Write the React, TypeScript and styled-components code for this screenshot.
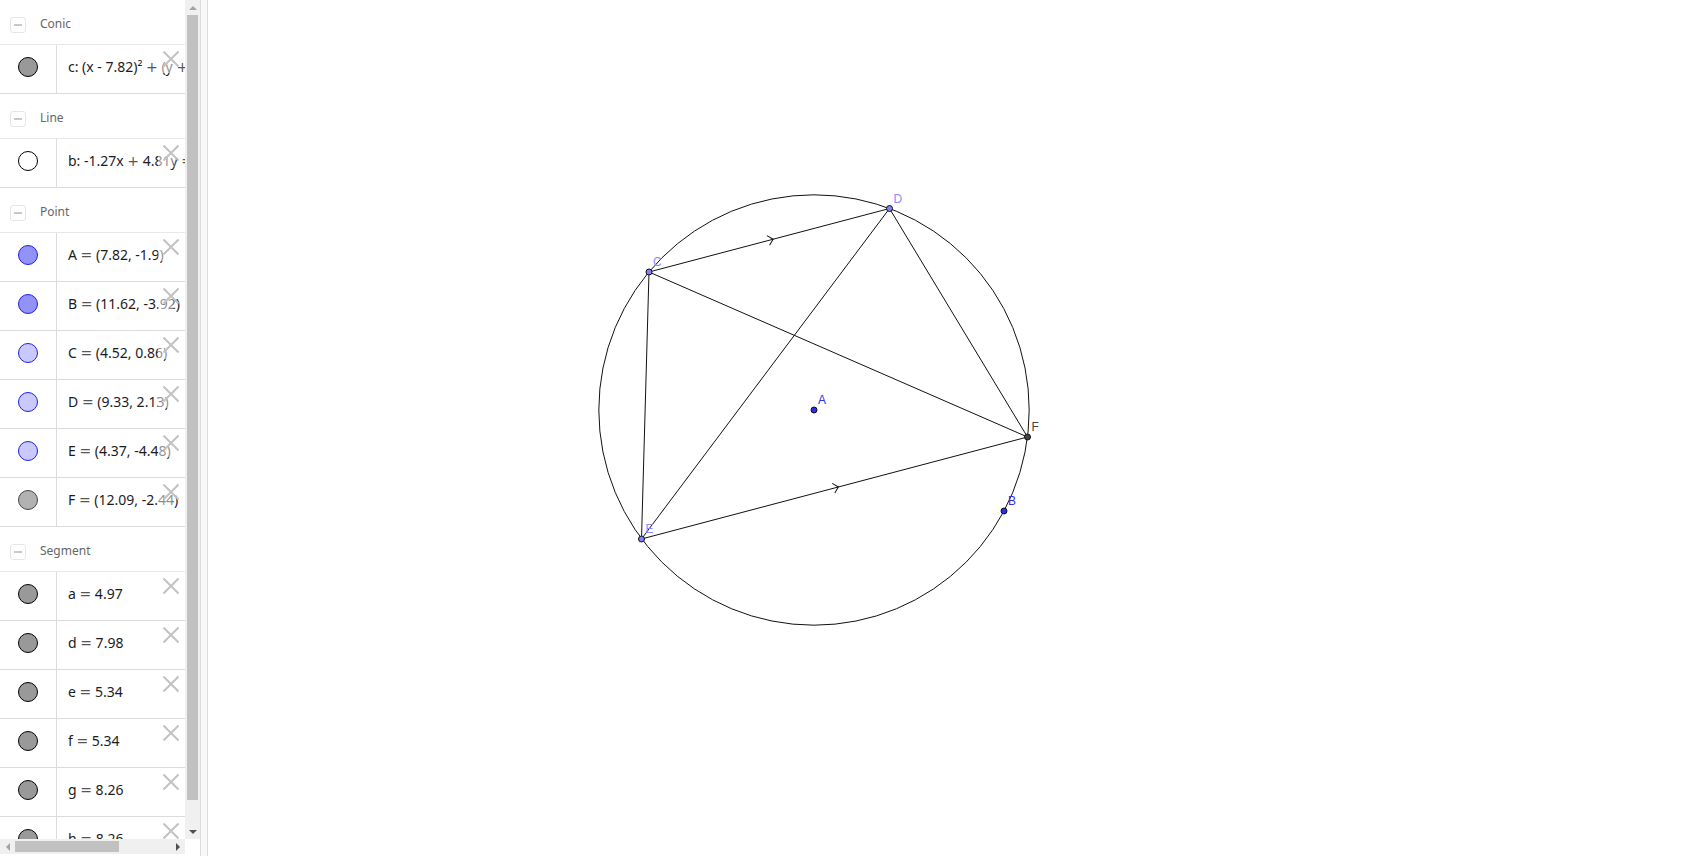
import React from "react";
import styled, { createGlobalStyle } from "styled-components";

const GlobalStyle = createGlobalStyle`
  * { box-sizing: border-box; }
  html, body, #root { height: 100%; margin: 0; }
  body { background: #fff; font-family: "Noto Sans", sans-serif; overflow: hidden; }
  button { border: 0; padding: 0; background: none; font: inherit; cursor: pointer; }
`;

const Workspace = styled.div`
  display: flex;
  height: 100vh;
  overflow: hidden;
`;

const Sidebar = styled.aside`
  flex: none;
  display: grid;
  grid-template-columns: 185px 15px;
  grid-template-rows: minmax(0, 1fr) 15px;
  padding-bottom: 2px;
`;

const List = styled.div`
  overflow: hidden;
`;

const GroupHeader = styled.h2`
  display: flex;
  align-items: center;
  gap: 14px;
  height: 45px;
  margin: 0;
  padding: 3px 0 0 10px;
  border-bottom: 1px solid #e8e8e8;
  color: #666;
  font-size: 12px;
  font-weight: 400;
  line-height: 16px;
`;

const Collapse = styled.button`
  display: flex;
  align-items: center;
  justify-content: center;
  width: 16px;
  height: 16px;
  margin-top: 3px;
  border: 1px solid #e6e6e6;
  border-radius: 3px;

  &::before {
    content: "";
    width: 8px;
    height: 2px;
    background: #c8c8c8;
  }
`;

const Rows = styled.ul`
  margin: 0;
  padding: 0;
  list-style: none;
`;

const Row = styled.li`
  display: grid;
  grid-template-columns: 57px 1fr;
  position: relative;
  height: 49px;
  border-bottom: 1px solid #dcdcdc;
`;

const MarbleCell = styled.div`
  display: flex;
  justify-content: center;
  padding-top: 12px;
  border-right: 1px solid #dcdcdc;
`;

const Marble = styled.button<{ $fill: string; $stroke: string }>`
  width: 20px;
  height: 20px;
  border: 1px solid ${(p) => p.$stroke};
  border-radius: 50%;
  background: ${(p) => p.$fill};
`;

const Formula = styled.div`
  overflow: hidden;
  padding: 12px 0 0 11px;
  color: #1c1c1f;
  font-size: 14px;
  line-height: 20px;
  white-space: nowrap;
`;

const Operator = styled.span`
  color: #555;
  font-family: "DejaVu Sans", sans-serif;
  font-weight: 400;
`;

const Remove = styled.button`
  position: absolute;
  top: 0;
  right: 0;
  display: flex;
  width: 27px;
  height: 28px;
  padding: 6px 0 0 5px;
  background: linear-gradient(to right, rgba(255, 255, 255, 0.5) 50%, rgba(255, 255, 255, 0) 70%);
`;

const VTrack = styled.div`
  display: flex;
  flex-direction: column;
  align-items: center;
  justify-content: space-between;
  background: #f0f0f0;
`;

const HTrack = styled.div`
  display: flex;
  align-items: center;
  justify-content: space-between;
  background: #f0f0f0;
`;

const Arrow = styled.button`
  display: flex;
  align-items: center;
  justify-content: center;
  width: 15px;
  height: 15px;
`;

const VThumbArea = styled.div`
  flex: 1;
  width: 11px;
`;

const VThumb = styled.div`
  height: 97%;
  background: #c1c1c1;
`;

const HThumbArea = styled.div`
  flex: 1;
  height: 11px;
`;

const HThumb = styled.div`
  width: 67%;
  height: 100%;
  background: #c1c1c1;
`;

const Splitter = styled.div`
  flex: none;
  width: 8px;
  border: solid #dcdcdc;
  border-width: 0 1px;
  background: #f8f8f8;
`;

const Canvas = styled.main`
  flex: 1;
  min-width: 0;
`;

const Drawing = styled.svg`
  display: block;
  width: 100%;
  height: 100%;
`;

const Label = styled.text`
  font-family: "Liberation Sans", Arial, sans-serif;
  font-size: 12px;
`;

type Item = { text: string; fill: string; stroke: string };
const GREY = { fill: "#999", stroke: "#000" };
const FREE = { fill: "#9292f8", stroke: "#2020e0" };
const ON_PATH = { fill: "#c9c9ff", stroke: "#2020e0" };

const groups: { name: string; items: Item[] }[] = [
  { name: "Conic", items: [{ text: "c: (x - 7.82)² + (y + 1.9)² = 18.52", ...GREY }] },
  { name: "Line", items: [{ text: "b: -1.27x + 4.81y = -27.12", fill: "#fff", stroke: "#000" }] },
  {
    name: "Point",
    items: [
      { text: "A = (7.82, -1.9)", ...FREE },
      { text: "B = (11.62, -3.92)", ...FREE },
      { text: "C = (4.52, 0.86)", ...ON_PATH },
      { text: "D = (9.33, 2.13)", ...ON_PATH },
      { text: "E = (4.37, -4.48)", ...ON_PATH },
      { text: "F = (12.09, -2.44)", fill: "#b2b2b2", stroke: "#444" },
    ],
  },
  {
    name: "Segment",
    items: ["a = 4.97", "d = 7.98", "e = 5.34", "f = 5.34", "g = 8.26", "h = 8.26"].map((text) => ({ text, ...GREY })),
  },
];

type Vertex = { x: number; y: number; fill: string; ink: string };
const SCALE = 50;
const ORIGIN = { x: 215, y: 315 };
const at = (x: number, y: number) => ({ x: ORIGIN.x + x * SCALE, y: ORIGIN.y - y * SCALE });

const points: Record<string, Vertex> = {
  A: { ...at(7.82, -1.9), fill: "#2e2ee6", ink: "#2e2ee6" },
  B: { ...at(11.62, -3.92), fill: "#2e2ee6", ink: "#2e2ee6" },
  C: { ...at(4.52, 0.86), fill: "#8080ff", ink: "#8c8cff" },
  D: { ...at(9.33, 2.13), fill: "#8080ff", ink: "#8c8cff" },
  E: { ...at(4.37, -4.48), fill: "#8080ff", ink: "#8c8cff" },
  F: { ...at(12.09, -2.44), fill: "#444", ink: "#444" },
};

const segments = ["CD", "DE", "CE", "DF", "CF", "EF"];

function ParallelMark({ from, to }: { from: Vertex; to: Vertex }) {
  const angle = (Math.atan2(to.y - from.y, to.x - from.x) * 180) / Math.PI;
  return (
    <path
      d="M-1 -5 L4 0 L-1 5"
      transform={`translate(${(from.x + to.x) / 2} ${(from.y + to.y) / 2}) rotate(${angle})`}
    />
  );
}

const Expression = ({ text }: { text: string }) => (
  <Formula>
    {text.split(/([=+])/).map((part, i) =>
      part === "=" || part === "+" ? <Operator key={i}>{part}</Operator> : part
    )}
  </Formula>
);

const Triangle = ({ d, color }: { d: string; color: string }) => (
  <svg width="8" height="8" aria-hidden="true">
    <path d={d} fill={color} />
  </svg>
);

export default function App() {
  const { A, B, C, D, E, F } = points;
  return (
    <Workspace>
      <GlobalStyle />
      <Sidebar>
        <List>
          {groups.map((group) => (
            <section key={group.name}>
              <GroupHeader>
                <Collapse aria-label={`Collapse ${group.name}`} />
                {group.name}
              </GroupHeader>
              <Rows>
                {group.items.map((item) => (
                  <Row key={item.text}>
                    <MarbleCell>
                      <Marble $fill={item.fill} $stroke={item.stroke} aria-label="Show or hide object" />
                    </MarbleCell>
                    <Expression text={item.text} />
                    <Remove aria-label="Delete">
                      <svg width="16" height="16" aria-hidden="true">
                        <path d="M0.5 0.5 L15.5 15.5 M15.5 0.5 L0.5 15.5" stroke="#c2c2c2" strokeWidth="2" />
                      </svg>
                    </Remove>
                  </Row>
                ))}
              </Rows>
            </section>
          ))}
        </List>
        <VTrack>
          <Arrow aria-label="Scroll up"><Triangle d="M0 6 L4 2 L8 6Z" color="#a3a3a3" /></Arrow>
          <VThumbArea><VThumb /></VThumbArea>
          <Arrow aria-label="Scroll down"><Triangle d="M0 2 L4 6 L8 2Z" color="#505050" /></Arrow>
        </VTrack>
        <HTrack>
          <Arrow aria-label="Scroll left"><Triangle d="M6 0 L2 4 L6 8Z" color="#a3a3a3" /></Arrow>
          <HThumbArea><HThumb /></HThumbArea>
          <Arrow aria-label="Scroll right"><Triangle d="M2 0 L6 4 L2 8Z" color="#505050" /></Arrow>
        </HTrack>
      </Sidebar>
      <Splitter />
      <Canvas>
        <Drawing role="img" aria-label="Cyclic quadrilateral with parallel sides CD and EF">
          <g fill="none" stroke="#111" strokeWidth="1">
            <circle cx={A.x} cy={A.y} r={Math.hypot(B.x - A.x, B.y - A.y)} />
            {segments.map(([p, q]) => (
              <line key={p + q} x1={points[p].x} y1={points[p].y} x2={points[q].x} y2={points[q].y} />
            ))}
            <ParallelMark from={C} to={D} />
            <ParallelMark from={E} to={F} />
          </g>
          {Object.entries(points).map(([name, p]) => (
            <g key={name}>
              <circle cx={p.x} cy={p.y} r="3" fill={p.fill} stroke="#111" />
              <Label x={p.x + 4} y={p.y - 6} fill={p.ink}>{name}</Label>
            </g>
          ))}
        </Drawing>
      </Canvas>
    </Workspace>
  );
}
